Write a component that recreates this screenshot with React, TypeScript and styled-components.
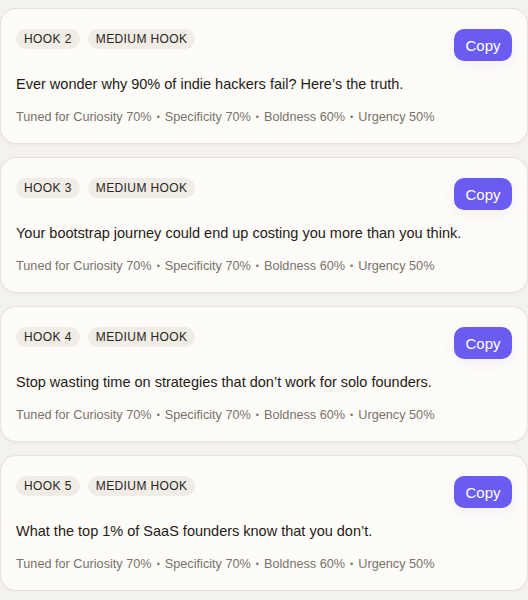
import React from "react";
import styled, { createGlobalStyle } from "styled-components";

const Global = createGlobalStyle`
  html, body { margin: 0; padding: 0; background: #f4f2ef; }
  body { font-family: "Liberation Sans", Arial, sans-serif; -webkit-font-smoothing: antialiased; }
`;

const List = styled.div`
  display: flex;
  flex-direction: column;
  gap: 13px;
  padding-top: 8px;
  width: 528px;
`;

const Card = styled.div`
  box-sizing: border-box;
  width: 528px;
  height: 136px;
  background: #fefcf8;
  border: 1px solid #e6e2dc;
  border-radius: 16px;
  box-shadow: 0 1px 3px rgba(60, 45, 30, 0.06);
  padding: 20px 15px 0 15px;
  display: flex;
  flex-direction: column;
`;

const Header = styled.div`
  display: flex;
  justify-content: space-between;
  align-items: flex-start;
`;

const Badges = styled.div`
  display: flex;
  gap: 8px;
`;

const Badge = styled.span`
  display: inline-flex;
  align-items: center;
  height: 20px;
  padding: 0 8px;
  border-radius: 10px;
  background: #f0ece6;
  color: #2a2622;
  font-size: 12px;
  letter-spacing: 0.4px;
  text-transform: uppercase;
`;

const CopyButton = styled.button`
  box-sizing: border-box;
  width: 58px;
  height: 32px;
  border: none;
  border-radius: 10px;
  background: #6b5cf1;
  color: #fff;
  font-family: "Liberation Sans", Arial, sans-serif;
  font-size: 15px;
  padding: 0;
  box-shadow: 0 4px 14px rgba(107, 92, 241, 0.08);
  cursor: pointer;
`;

const HookText = styled.p`
  margin: 12px 0 0 0;
  font-size: 14.5px;
  line-height: 22px;
  color: #1e1a16;
`;

const Meta = styled.p`
  margin: 13px 0 0 0;
  font-size: 12.7px;
  line-height: 18px;
  color: #78726b;
`;

const Dot = styled.span`
  display: inline-block;
  margin: 0 5px;
  font-size: 9px;
  vertical-align: 1px;
`;

const hooks = [
  { n: 2, text: "Ever wonder why 90% of indie hackers fail? Here\u2019s the truth." },
  { n: 3, text: "Your bootstrap journey could end up costing you more than you think." },
  { n: 4, text: "Stop wasting time on strategies that don\u2019t work for solo founders." },
  { n: 5, text: "What the top 1% of SaaS founders know that you don\u2019t." },
];

const metrics = ["Tuned for Curiosity 70%", "Specificity 70%", "Boldness 60%", "Urgency 50%"];

export default function App() {
  return (
    <>
      <Global />
      <List>
        {hooks.map((h) => (
          <Card key={h.n}>
            <Header>
              <Badges>
                <Badge>Hook {h.n}</Badge>
                <Badge>Medium Hook</Badge>
              </Badges>
              <CopyButton>Copy</CopyButton>
            </Header>
            <HookText>{h.text}</HookText>
            <Meta>
              {metrics.map((m, i) => (
                <React.Fragment key={m}>
                  {i > 0 && <Dot>•</Dot>}
                  {m}
                </React.Fragment>
              ))}
            </Meta>
          </Card>
        ))}
      </List>
    </>
  );
}
